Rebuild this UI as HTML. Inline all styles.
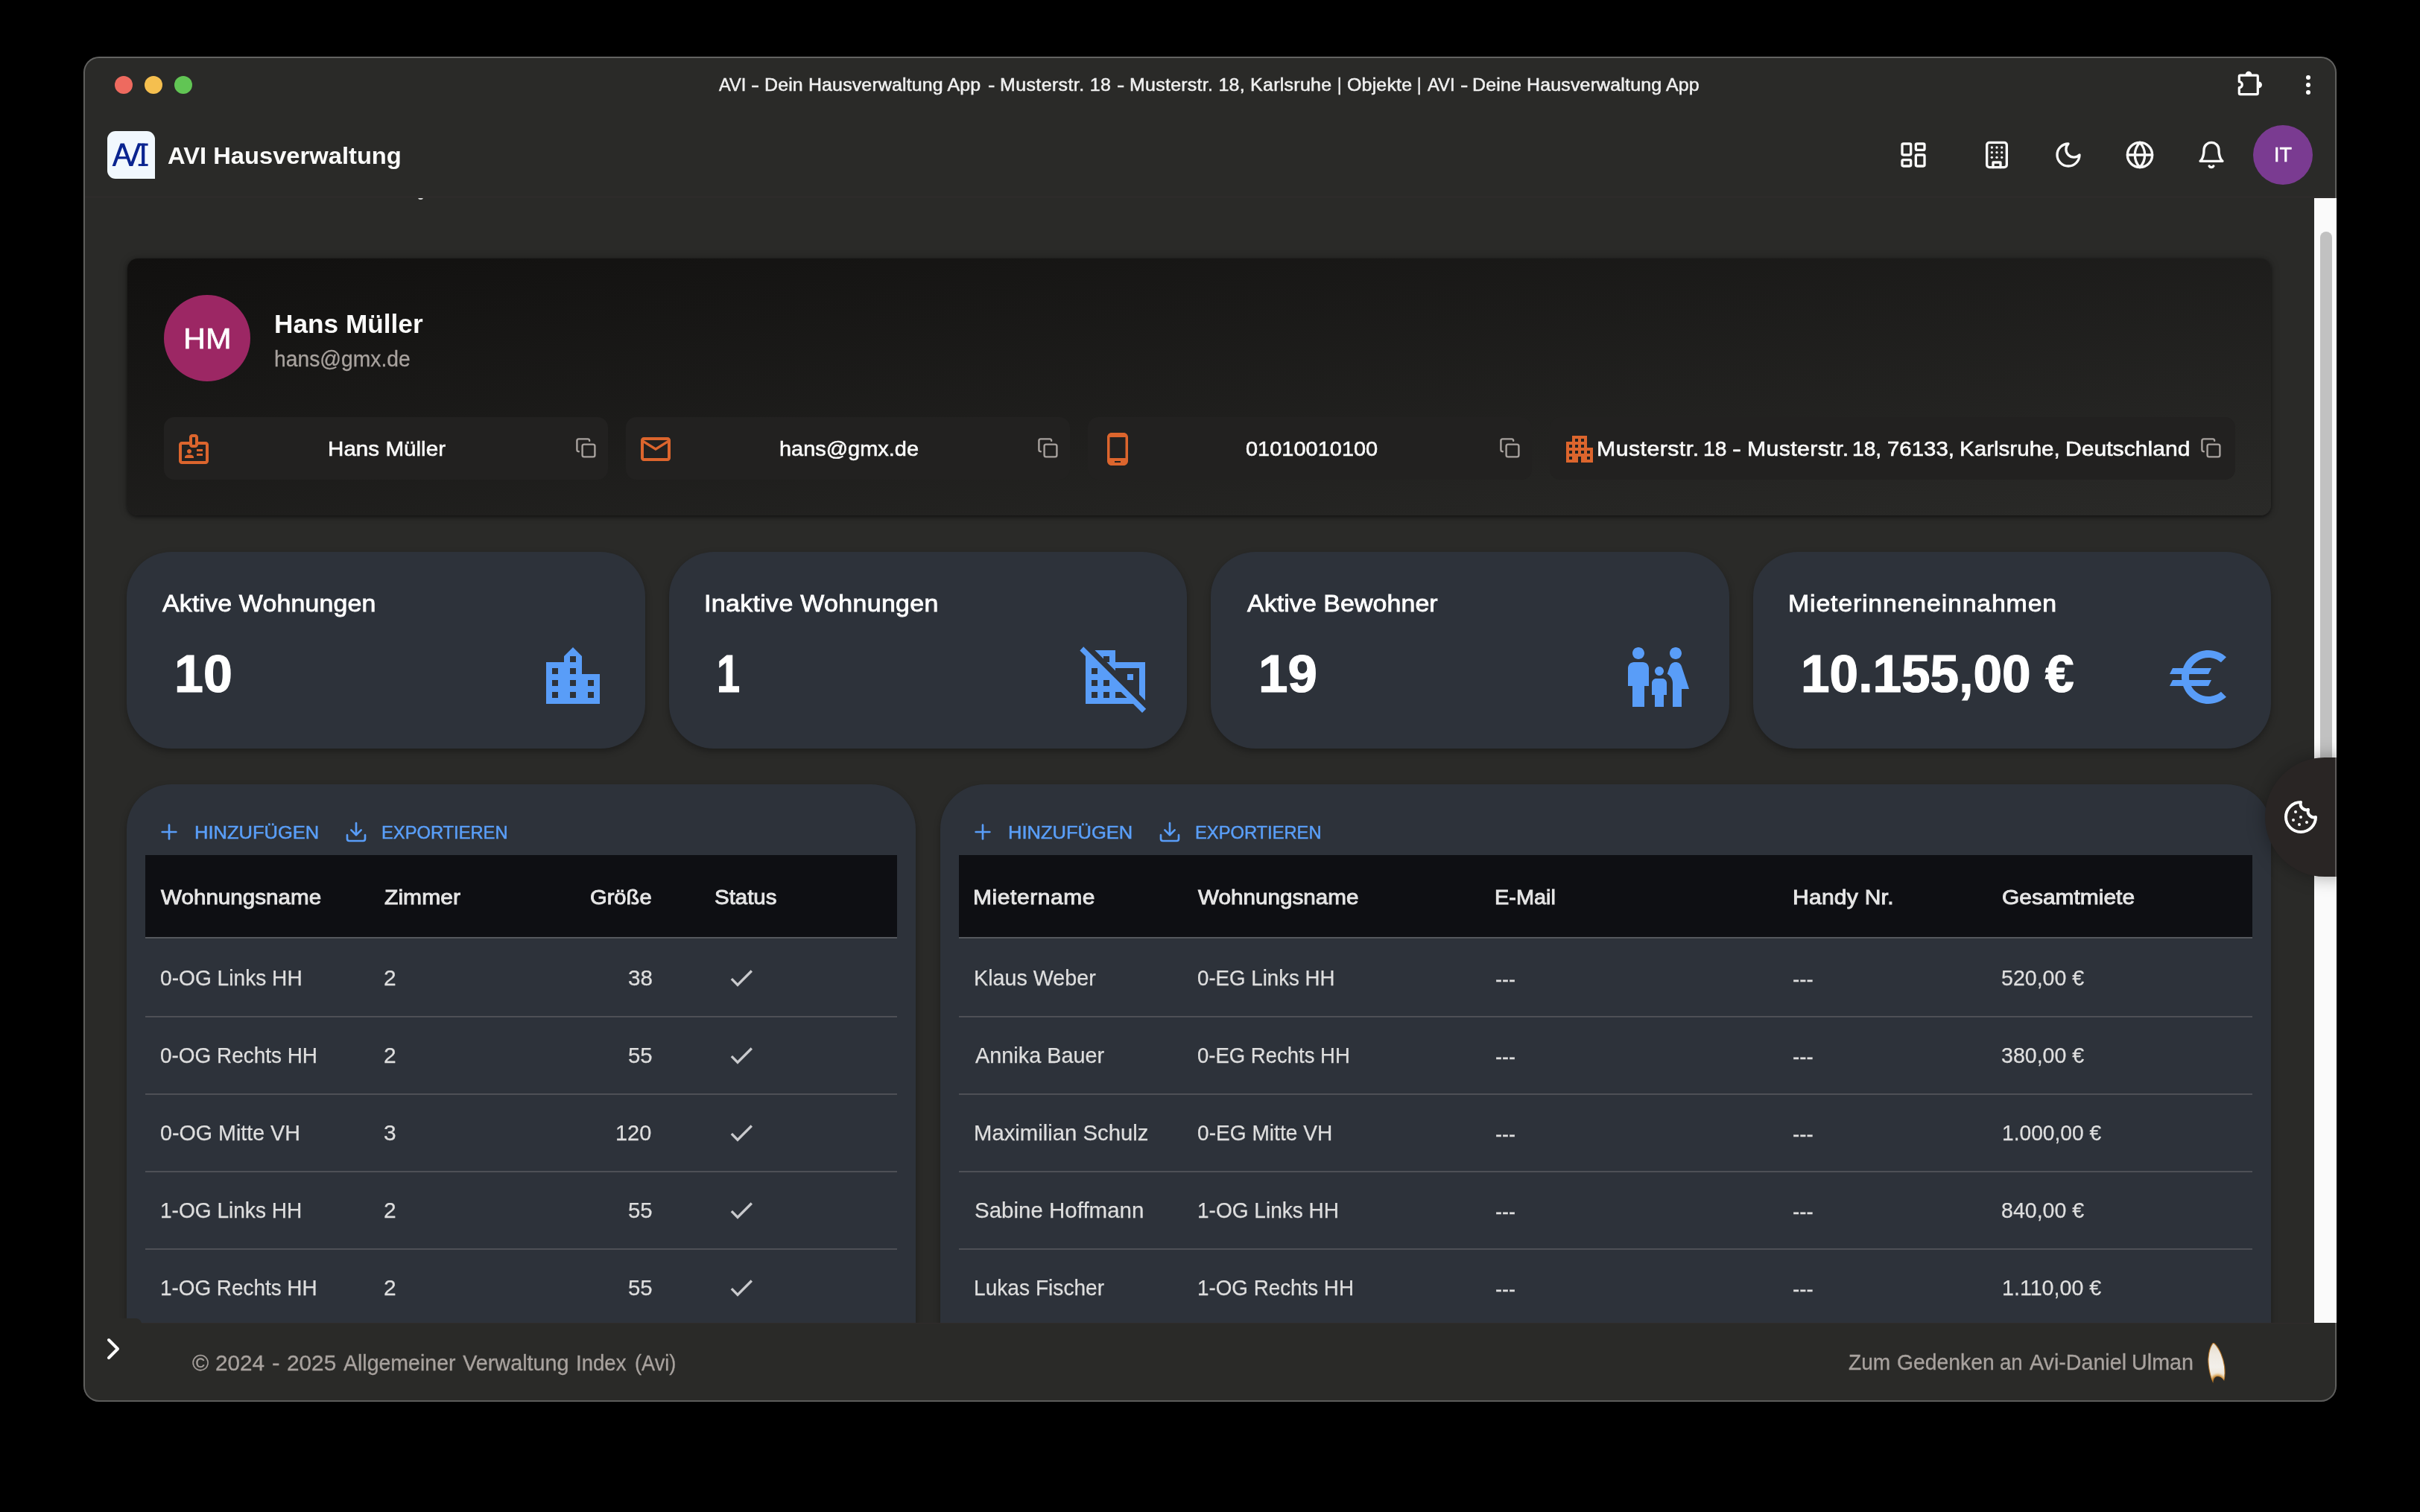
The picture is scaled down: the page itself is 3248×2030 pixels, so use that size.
<!DOCTYPE html>
<html lang="de"><head><meta charset="utf-8"><title>AVI - Dein Hausverwaltung App</title>
<style>
html,body{margin:0;padding:0;background:#000;}
body{width:3248px;height:2030px;overflow:hidden;position:relative;font-family:"Liberation Sans",sans-serif;}
.a{position:absolute;display:block}
.t{position:absolute;white-space:pre;line-height:1;font-family:"Liberation Sans",sans-serif;-webkit-font-smoothing:antialiased}
#win{position:absolute;left:112px;top:76px;width:3024px;height:1805.6px;border-radius:21px;background:#2a2a28}
#bd{position:absolute;left:112px;top:76px;width:3024px;height:1805.6px;border-radius:21px;box-shadow:inset 0 0 0 2px rgba(255,255,255,.24), inset 0 1px 0 1px rgba(255,255,255,.04)}
#clip{position:absolute;left:112px;top:76px;width:3024px;height:1805.6px;border-radius:21px;overflow:hidden}
#content{position:absolute;left:0;top:190px;width:3024px;height:1510px;overflow:hidden}
#page{position:absolute;left:0;top:0;width:3248px;height:2030px}
#txt{position:absolute;left:0;top:0;width:3248px;height:2030px;will-change:transform}
</style></head><body>
<div id="win"></div>
<div id="clip"><div id="content">
<div class="a" style="left:449px;top:-1.5px;width:7px;height:3.5px;border-radius:0 0 4px 4px;background:#d8d8d8"></div>
<div class="a" style="left:59px;top:81px;width:2877px;height:345px;border-radius:14px;background:linear-gradient(to bottom right,#11100f,#2a2a28);box-shadow:0 2px 5px rgba(0,0,0,.5), 0 0 12px rgba(0,0,0,.22)"></div>
<div class="a" style="left:108px;top:130px;width:116px;height:116px;border-radius:50%;background:#9c2764"></div>
<div class="a" style="left:108px;top:294px;width:596px;height:84px;border-radius:14px;background:#222120"></div>
<div class="a" style="left:728px;top:294px;width:596px;height:84px;border-radius:14px;background:#222120"></div>
<div class="a" style="left:1348px;top:294px;width:596px;height:84px;border-radius:14px;background:#222120"></div>
<div class="a" style="left:1968px;top:294px;width:920px;height:84px;border-radius:14px;background:#222120"></div>
<svg class="a" style="left:123.80000000000001px;top:312.6px" width="48" height="48" viewBox="0 0 24 24" fill="#dc652d"><path d="M14 12h4v1.5h-4zm0 3h4v1.5h-4z M20 7h-5V4c0-1.1-.9-2-2-2h-2c-1.1 0-2 .9-2 2v3H4c-1.1 0-2 .9-2 2v11c0 1.1.9 2 2 2h16c1.1 0 2-.9 2-2V9c0-1.1-.9-2-2-2zm-9-3h2v5h-2V4zm9 16H4V9h5c0 1.1.9 2 2 2h2c1.1 0 2-.9 2-2h5v11z M9 15c.83 0 1.5-.67 1.5-1.5S9.830 12 9 12s-1.500.67-1.500 1.500S8.170 15 9 15zm2.080 1.180C10.440 15.900 9.740 15.750 9 15.750s-1.440.15-2.080.43c-.56.240-.92.780-.92 1.390V18h6v-.43c0-.61-.36-1.150-.92-1.390z"/></svg>
<svg class="a" style="left:743.8px;top:312.9px" width="48" height="48" viewBox="0 0 24 24" fill="#dc652d"><path d="M20 4H4c-1.1 0-1.990.9-1.990 2L2 18c0 1.100.9 2 2 2h16c1.100 0 2-.9 2-2V6c0-1.100-.9-2-2-2zm0 14H4V8l8 5 8-5v10zm-8-7L4 6h16l-8 5z"/></svg>
<svg class="a" style="left:1363.8px;top:312.9px" width="48" height="48" viewBox="0 0 24 24" fill="#dc652d"><path d="M16 1H8C6.340 1 5 2.340 5 4v16c0 1.660 1.340 3 3 3h8c1.660 0 3-1.340 3-3V4c0-1.660-1.340-3-3-3zm-2 20h-4v-1h4v1zm3.250-3H6.750V4h10.500v14z"/></svg>
<svg class="a" style="left:1983.9px;top:312.9px" width="48" height="48" viewBox="0 0 24 24" fill="#dc652d"><path d="M17 11V3H7v4H3v14h8v-4h2v4h8V11h-4zM7 19H5v-2h2v2zm0-4H5v-2h2v2zm0-4H5V9h2v2zm4 4H9v-2h2v2zm0-4H9V9h2v2zm0-4H9V5h2v2zm4 8h-2v-2h2v2zm0-4h-2V9h2v2zm0-4h-2V5h2v2zm4 12h-2v-2h2v2zm0-4h-2v-2h2v2z"/></svg>
<svg class="a" style="left:659.6px;top:320.6px" width="28.8" height="28.8" viewBox="0 0 24 24" fill="none" stroke="#a8a29e" stroke-width="2" stroke-linecap="round" stroke-linejoin="round"><rect width="14" height="14" x="8" y="8" rx="2" ry="2"/><path d="M4 16c-1.1 0-2-.9-2-2V4c0-1.1.9-2 2-2h10c1.1 0 2 .9 2 2"/></svg>
<svg class="a" style="left:1279.6px;top:320.6px" width="28.8" height="28.8" viewBox="0 0 24 24" fill="none" stroke="#a8a29e" stroke-width="2" stroke-linecap="round" stroke-linejoin="round"><rect width="14" height="14" x="8" y="8" rx="2" ry="2"/><path d="M4 16c-1.1 0-2-.9-2-2V4c0-1.1.9-2 2-2h10c1.1 0 2 .9 2 2"/></svg>
<svg class="a" style="left:1899.6px;top:320.6px" width="28.8" height="28.8" viewBox="0 0 24 24" fill="none" stroke="#a8a29e" stroke-width="2" stroke-linecap="round" stroke-linejoin="round"><rect width="14" height="14" x="8" y="8" rx="2" ry="2"/><path d="M4 16c-1.1 0-2-.9-2-2V4c0-1.1.9-2 2-2h10c1.1 0 2 .9 2 2"/></svg>
<svg class="a" style="left:2841.4px;top:320.6px" width="28.8" height="28.8" viewBox="0 0 24 24" fill="none" stroke="#a8a29e" stroke-width="2" stroke-linecap="round" stroke-linejoin="round"><rect width="14" height="14" x="8" y="8" rx="2" ry="2"/><path d="M4 16c-1.1 0-2-.9-2-2V4c0-1.1.9-2 2-2h10c1.1 0 2 .9 2 2"/></svg>
<div class="a" style="left:58px;top:475px;width:695.5px;height:263.5px;border-radius:60px;background:#2d323a;box-shadow:0 4px 10px rgba(0,0,0,.3)"></div>
<div class="a" style="left:785.5px;top:475px;width:695.5px;height:263.5px;border-radius:60px;background:#2d323a;box-shadow:0 4px 10px rgba(0,0,0,.3)"></div>
<div class="a" style="left:1513px;top:475px;width:695.5px;height:263.5px;border-radius:60px;background:#2d323a;box-shadow:0 4px 10px rgba(0,0,0,.3)"></div>
<div class="a" style="left:2240.5px;top:475px;width:695.5px;height:263.5px;border-radius:60px;background:#2d323a;box-shadow:0 4px 10px rgba(0,0,0,.3)"></div>
<svg class="a" style="left:608.6px;top:594.8px" width="96" height="96" viewBox="0 0 24 24" fill="#599df8"><path d="M15 11V5l-3-3-3 3v2H3v14h18V11h-6zm-8 8H5v-2h2v2zm0-4H5v-2h2v2zm0-4H5V9h2v2zm6 8h-2v-2h2v2zm0-4h-2v-2h2v2zm0-4h-2V9h2v2zm0-4h-2V5h2v2zm6 12h-2v-2h2v2zm0-4h-2v-2h2v2z"/></svg>
<svg class="a" style="left:1336.7px;top:595.4px" width="96" height="96" viewBox="0 0 24 24" fill="#599df8"><path d="M5.1 3 H12 V7 H22 V19.9 L20 17.9 V9 H12 V9.9 L9.1 7 H10 V5 H8 V5.9 Z M16 11h2v2h-2z M1.3 1.8 L0.1 3.1 L2 5 V21 H18 L21 24 L22.3 22.7 Z M4 9h2v2H4z M4 13h2v2H4z M4 17h2v2H4z M8 13h2v2H8z M8 17h2v2H8z M12 17h1.9l2 2H12z" fill-rule="evenodd"/></svg>
<svg class="a" style="left:2064.8px;top:594.8px" width="96" height="96" viewBox="0 0 24 24" fill="#599df8"><path d="M16 4c0-1.11.89-2 2-2s2 .89 2 2-.89 2-2 2-2-.89-2-2zm4 18v-6h2.500l-2.540-7.630C19.680 7.550 18.920 7 18.060 7h-.12c-.86 0-1.630.55-1.900 1.370l-.86 2.580c1.080.6 1.820 1.730 1.820 3.050v8h3zm-7.500-10.500c.83 0 1.500-.67 1.500-1.500s-.67-1.500-1.500-1.500S11 9.170 11 10s.67 1.500 1.500 1.500zM5.500 6c1.110 0 2-.89 2-2s-.89-2-2-2-2 .89-2 2 .89 2 2 2zm2 16v-7H9V9c0-1.100-.9-2-2-2H4c-1.100 0-2 .9-2 2v6h1.500v7h4zm6.500 0v-4h1v-4c0-.82-.68-1.500-1.500-1.500h-2c-.82 0-1.500.68-1.500 1.500v4h1v4h3z"/></svg>
<svg class="a" style="left:2792px;top:594.8px" width="96" height="96" viewBox="0 0 24 24" fill="#599df8"><path d="M15 18.5c-2.510 0-4.680-1.420-5.760-3.500H15l1-2H8.580c-.05-.33-.08-.66-.08-1s.03-.67.08-1H15l1-2H9.240C10.320 6.920 12.500 5.500 15 5.500c1.610 0 3.090.590 4.230 1.570L21 5.300C19.410 3.870 17.300 3 15 3c-3.920 0-7.240 2.510-8.480 6H3l-1 2h4.060c-.04.330-.06.660-.06 1s.02.670.06 1H3l-1 2h4.520c1.240 3.490 4.560 6 8.480 6 2.310 0 4.410-.870 6-2.300l-1.780-1.770c-1.130.980-2.600 1.570-4.220 1.570z"/></svg>
<div class="a" style="left:58px;top:787px;width:1059px;height:800px;border-radius:60px;background:#2d323a;box-shadow:0 4px 10px rgba(0,0,0,.3)"></div>
<div class="a" style="left:1149.5px;top:787px;width:1786.5px;height:800px;border-radius:60px;background:#2d323a;box-shadow:0 4px 10px rgba(0,0,0,.3)"></div>
<div class="a" style="left:83px;top:882px;width:1009px;height:109.5px;background:#0e0f13"></div>
<div class="a" style="left:83px;top:991.5px;width:1009px;height:2px;background:#55585d"></div>
<div class="a" style="left:83px;top:1097.5px;width:1009px;height:2px;background:#4e5056"></div>
<div class="a" style="left:83px;top:1201.5px;width:1009px;height:2px;background:#4e5056"></div>
<div class="a" style="left:83px;top:1305.5px;width:1009px;height:2px;background:#4e5056"></div>
<div class="a" style="left:83px;top:1409.5px;width:1009px;height:2px;background:#4e5056"></div>
<div class="a" style="left:1175px;top:882px;width:1736px;height:109.5px;background:#0e0f13"></div>
<div class="a" style="left:1175px;top:991.5px;width:1736px;height:2px;background:#55585d"></div>
<div class="a" style="left:1175px;top:1097.5px;width:1736px;height:2px;background:#4e5056"></div>
<div class="a" style="left:1175px;top:1201.5px;width:1736px;height:2px;background:#4e5056"></div>
<div class="a" style="left:1175px;top:1305.5px;width:1736px;height:2px;background:#4e5056"></div>
<div class="a" style="left:1175px;top:1409.5px;width:1736px;height:2px;background:#4e5056"></div>
<svg class="a" style="left:99.19999999999999px;top:835.0px" width="32" height="32" viewBox="0 0 24 24" fill="none" stroke="#599df8" stroke-width="2" stroke-linecap="round" stroke-linejoin="round"><path d="M5 12h14"/><path d="M12 5v14"/></svg>
<svg class="a" style="left:350.0px;top:835.0px" width="32" height="32" viewBox="0 0 24 24" fill="none" stroke="#599df8" stroke-width="2" stroke-linecap="round" stroke-linejoin="round"><path d="M21 15v4a2 2 0 0 1-2 2H5a2 2 0 0 1-2-2v-4"/><polyline points="7 10 12 15 17 10"/><line x1="12" x2="12" y1="15" y2="3"/></svg>
<svg class="a" style="left:1190.7px;top:835.0px" width="32" height="32" viewBox="0 0 24 24" fill="none" stroke="#599df8" stroke-width="2" stroke-linecap="round" stroke-linejoin="round"><path d="M5 12h14"/><path d="M12 5v14"/></svg>
<svg class="a" style="left:1441.5px;top:835.0px" width="32" height="32" viewBox="0 0 24 24" fill="none" stroke="#599df8" stroke-width="2" stroke-linecap="round" stroke-linejoin="round"><path d="M21 15v4a2 2 0 0 1-2 2H5a2 2 0 0 1-2-2v-4"/><polyline points="7 10 12 15 17 10"/><line x1="12" x2="12" y1="15" y2="3"/></svg>
<svg class="a" style="left:863px;top:1027px" width="40" height="40" viewBox="0 0 24 24" fill="#c9cacd"><path d="M9 16.17 4.830 12l-1.420 1.410L9 19 21 7l-1.410-1.410z"/></svg>
<svg class="a" style="left:863px;top:1131px" width="40" height="40" viewBox="0 0 24 24" fill="#c9cacd"><path d="M9 16.17 4.830 12l-1.420 1.410L9 19 21 7l-1.410-1.410z"/></svg>
<svg class="a" style="left:863px;top:1235px" width="40" height="40" viewBox="0 0 24 24" fill="#c9cacd"><path d="M9 16.17 4.830 12l-1.420 1.410L9 19 21 7l-1.410-1.410z"/></svg>
<svg class="a" style="left:863px;top:1339px" width="40" height="40" viewBox="0 0 24 24" fill="#c9cacd"><path d="M9 16.17 4.830 12l-1.420 1.410L9 19 21 7l-1.410-1.410z"/></svg>
<svg class="a" style="left:863px;top:1443px" width="40" height="40" viewBox="0 0 24 24" fill="#c9cacd"><path d="M9 16.17 4.830 12l-1.420 1.410L9 19 21 7l-1.410-1.410z"/></svg>
<div class="a" style="left:2994px;top:0;width:30px;height:1510px;background:#fafafa"></div>
<div class="a" style="left:3002px;top:45px;width:16px;height:800px;border-radius:8px;background:#c1c1c1"></div>
<div class="a" style="left:2928px;top:751px;width:120px;height:160px;border-radius:80px 0 0 80px;background:#292524;box-shadow:0 0 24px rgba(0,0,0,.35)"></div>
<svg class="a" style="left:2952.0px;top:807.0px" width="48" height="48" viewBox="0 0 24 24" fill="none" stroke="#fff" stroke-width="2" stroke-linecap="round" stroke-linejoin="round"><path d="M12 2a10 10 0 1 0 10 10 4 4 0 0 1-5-5 4 4 0 0 1-5-5"/><path d="M8.5 8.5v.01"/><path d="M16 15.5v.01"/><path d="M12 12v.01"/><path d="M11 17v.01"/><path d="M7 14v.01"/></svg>
</div></div>
<div id="page">
<div class="a" style="left:154px;top:102px;width:24px;height:24px;border-radius:50%;background:#ee6a5f"></div>
<div class="a" style="left:194px;top:102px;width:24px;height:24px;border-radius:50%;background:#f5bf4f"></div>
<div class="a" style="left:234px;top:102px;width:24px;height:24px;border-radius:50%;background:#61c554"></div>
<svg class="a" style="left:2996px;top:88px" width="48" height="48" viewBox="2996 88 48 48">
<path d="M3006.9 101.1 H3028.7 A1.6 1.6 0 0 1 3030.3 102.7 V125 A1.6 1.6 0 0 1 3028.7 126.6 H3006.9 A1.6 1.6 0 0 1 3005.3 125 V117.7 A4 4 0 0 0 3005.3 109.7 V102.7 A1.6 1.6 0 0 1 3006.9 101.1 Z" fill="none" stroke="#fff" stroke-width="3.2" stroke-linejoin="round"/>
<path d="M3013.7 100 A4.3 4.3 0 0 1 3022.3 100 Z" fill="#fff"/>
<path d="M3031.6 109.4 A4.4 4.4 0 0 1 3031.6 118.2 Z" fill="#fff"/>
</svg>
<div class="a" style="left:3094.9px;top:101.0px;width:6.2px;height:6.2px;border-radius:50%;background:#fff"></div>
<div class="a" style="left:3094.9px;top:110.95px;width:6.2px;height:6.2px;border-radius:50%;background:#fff"></div>
<div class="a" style="left:3094.9px;top:121.0px;width:6.2px;height:6.2px;border-radius:50%;background:#fff"></div>
<div class="a" style="left:114px;top:264px;width:3020px;height:1px;background:#322d2c"></div>
<svg class="a" style="left:144px;top:176px" width="64" height="64" viewBox="0 0 64 64">
<path d="M11 0 H53 A11 11 0 0 1 64 11 V64 H11 A11 11 0 0 1 0 53 V11 A11 11 0 0 1 11 0 Z" fill="#f1f8fe"/>
<g fill="#0a2490">
<polygon points="6.6,46.9 10.9,46.9 20.3,21.5 29.6,46.9 34.2,46.9 45.4,16.6 41.0,16.6 31.9,41.6 22.8,16.6 17.7,16.6"/>
<rect x="13.6" y="34.2" width="13.6" height="3.2"/>
<rect x="41.0" y="16.6" width="13.6" height="3.0"/>
<rect x="46.1" y="16.6" width="4.2" height="30.3"/>
<rect x="41.7" y="44.1" width="12.9" height="2.8"/>
</g></svg>
<svg class="a" style="left:2548.0px;top:188.0px" width="40" height="40" viewBox="0 0 24 24" fill="none" stroke="#fafaf9" stroke-width="2" stroke-linecap="round" stroke-linejoin="round"><rect width="7" height="9" x="3" y="3" rx="1"/><rect width="7" height="5" x="14" y="3" rx="1"/><rect width="7" height="9" x="14" y="12" rx="1"/><rect width="7" height="5" x="3" y="16" rx="1"/></svg>
<svg class="a" style="left:2660.0px;top:188.0px" width="40" height="40" viewBox="0 0 24 24" fill="none" stroke="#fafaf9" stroke-width="2" stroke-linecap="round" stroke-linejoin="round"><rect width="16" height="20" x="4" y="2" rx="2" ry="2"/><path d="M9 22v-4h6v4"/><path d="M8 6h.01"/><path d="M16 6h.01"/><path d="M12 6h.01"/><path d="M12 10h.01"/><path d="M12 14h.01"/><path d="M16 10h.01"/><path d="M16 14h.01"/><path d="M8 10h.01"/><path d="M8 14h.01"/></svg>
<svg class="a" style="left:2756.0px;top:188.0px" width="40" height="40" viewBox="0 0 24 24" fill="none" stroke="#fafaf9" stroke-width="2" stroke-linecap="round" stroke-linejoin="round"><path d="M12 3a6 6 0 0 0 9 9 9 9 0 1 1-9-9Z"/></svg>
<svg class="a" style="left:2852.0px;top:188.0px" width="40" height="40" viewBox="0 0 24 24" fill="none" stroke="#fafaf9" stroke-width="2" stroke-linecap="round" stroke-linejoin="round"><circle cx="12" cy="12" r="10"/><path d="M12 2a14.5 14.5 0 0 0 0 20 14.5 14.5 0 0 0 0-20"/><path d="M2 12h20"/></svg>
<svg class="a" style="left:2948.0px;top:188.0px" width="40" height="40" viewBox="0 0 24 24" fill="none" stroke="#fafaf9" stroke-width="2" stroke-linecap="round" stroke-linejoin="round"><path d="M6 8a6 6 0 0 1 12 0c0 7 3 9 3 9H3s3-2 3-9"/><path d="M10.3 21a1.94 1.94 0 0 0 3.4 0"/></svg>
<div class="a" style="left:3024px;top:168px;width:80px;height:80px;border-radius:50%;background:#7a3b91"></div>
<div class="a" style="left:114px;top:1776px;width:2992px;height:1px;background:#322d2c;opacity:.8"></div>
<div class="a" style="left:114px;top:1770px;width:76px;height:8px;border-top-right-radius:9px;background:#2a2a28"></div>
<svg class="a" style="left:128.4px;top:1786.5px" width="48" height="48" viewBox="0 0 24 24" fill="none" stroke="#fff" stroke-width="2" stroke-linecap="round" stroke-linejoin="round"><path d="m9 18 6-6-6-6"/></svg>
<svg class="a" style="left:2956px;top:1796px" width="40" height="66" viewBox="2956 1795.3 40 66">
<defs><linearGradient id="fl" x1="0" y1="0" x2="0" y2="1"><stop offset="0" stop-color="#e6dccb"/><stop offset=".3" stop-color="#efe9e0"/><stop offset=".62" stop-color="#f2efea"/><stop offset=".8" stop-color="#efe7d9"/><stop offset="1" stop-color="#ead9b8"/></linearGradient>
<radialGradient id="fr" gradientUnits="userSpaceOnUse" cx="2976.6" cy="1854.5" r="13"><stop offset="0" stop-color="#8a4a08"/><stop offset=".5" stop-color="#b06a14"/><stop offset=".72" stop-color="#d9a65a" stop-opacity=".75"/><stop offset="1" stop-color="#ecd9b5" stop-opacity="0"/></radialGradient>
<filter id="fb" x="-20%" y="-20%" width="140%" height="140%"><feGaussianBlur stdDeviation="0.6"/></filter>
<clipPath id="fc"><path d="M2969.8 1803 C2965 1810 2962.8 1822 2964.2 1832 C2965.2 1841 2967.5 1849 2970 1854.4 C2970.6 1850 2972.5 1847 2976.4 1846.8 C2980.4 1847 2983.2 1849.6 2984.9 1852 C2986.3 1846 2986.4 1840 2985.6 1834 C2984.2 1823 2979 1810 2972.5 1803.6 C2971.5 1802.6 2970.5 1802.4 2969.8 1803 Z"/></clipPath></defs>
<g filter="url(#fb)"><path d="M2969.8 1803 C2965 1810 2962.8 1822 2964.2 1832 C2965.2 1841 2967.5 1849 2970 1854.4 C2970.6 1850 2972.5 1847 2976.4 1846.8 C2980.4 1847 2983.2 1849.6 2984.9 1852 C2986.3 1846 2986.4 1840 2985.6 1834 C2984.2 1823 2979 1810 2972.5 1803.6 C2971.5 1802.6 2970.5 1802.4 2969.8 1803 Z" fill="url(#fl)" stroke="#b8701c" stroke-width="1.2" stroke-opacity=".8"/>
<rect x="2956" y="1830" width="40" height="32" fill="url(#fr)" clip-path="url(#fc)"/></g>
</svg>
</div>
<div id="bd"></div>
<div id="txt">
<span class="t" style="left:964.86px;top:103.00px;font-size:23.1px;color:#f0f0f0;transform:scaleX(1.0205);transform-origin:0 0;-webkit-text-stroke:0.5px #f0f0f0;">AVI</span>
<span class="t" style="left:1008.33px;top:103.00px;font-size:23.1px;color:#f0f0f0;transform:scaleX(1.4308);transform-origin:0 0;-webkit-text-stroke:0.5px #f0f0f0;">-</span>
<span class="t" style="left:1025.99px;top:103.00px;font-size:23.1px;color:#f0f0f0;letter-spacing:0.134px;transform:scaleX(1.0800);transform-origin:0 0;-webkit-text-stroke:0.5px #f0f0f0;">Dein Hausverwaltung App</span>
<span class="t" style="left:1326.09px;top:103.00px;font-size:23.1px;color:#f0f0f0;transform:scaleX(1.2154);transform-origin:0 0;-webkit-text-stroke:0.5px #f0f0f0;">-</span>
<span class="t" style="left:1342.19px;top:103.00px;font-size:23.1px;color:#f0f0f0;letter-spacing:0.370px;transform:scaleX(1.0800);transform-origin:0 0;-webkit-text-stroke:0.5px #f0f0f0;">Musterstr. 18</span>
<span class="t" style="left:1499.30px;top:103.00px;font-size:23.1px;color:#f0f0f0;transform:scaleX(1.3385);transform-origin:0 0;-webkit-text-stroke:0.5px #f0f0f0;">-</span>
<span class="t" style="left:1516.29px;top:103.00px;font-size:23.1px;color:#f0f0f0;letter-spacing:0.253px;transform:scaleX(1.0800);transform-origin:0 0;-webkit-text-stroke:0.5px #f0f0f0;">Musterstr. 18, Karlsruhe</span>
<span class="t" style="left:1794.59px;top:103.00px;font-size:23.1px;color:#f0f0f0;transform:scaleX(0.9200);transform-origin:0 0;-webkit-text-stroke:0.5px #f0f0f0;">|</span>
<span class="t" style="left:1807.59px;top:103.00px;font-size:23.1px;color:#f0f0f0;letter-spacing:0.169px;transform:scaleX(1.0800);transform-origin:0 0;-webkit-text-stroke:0.5px #f0f0f0;">Objekte</span>
<span class="t" style="left:1902.19px;top:103.00px;font-size:23.1px;color:#f0f0f0;transform:scaleX(0.9200);transform-origin:0 0;-webkit-text-stroke:0.5px #f0f0f0;">|</span>
<span class="t" style="left:1915.66px;top:103.00px;font-size:23.1px;color:#f0f0f0;transform:scaleX(1.0291);transform-origin:0 0;-webkit-text-stroke:0.5px #f0f0f0;">AVI</span>
<span class="t" style="left:1959.98px;top:103.00px;font-size:23.1px;color:#f0f0f0;transform:scaleX(1.3538);transform-origin:0 0;-webkit-text-stroke:0.5px #f0f0f0;">-</span>
<span class="t" style="left:1976.19px;top:103.00px;font-size:23.1px;color:#f0f0f0;letter-spacing:0.153px;transform:scaleX(1.0800);transform-origin:0 0;-webkit-text-stroke:0.5px #f0f0f0;">Deine Hausverwaltung App</span>
<span class="t" style="left:224.80px;top:193.00px;font-size:32.1px;color:#fafaf9;font-weight:700;transform:scaleX(1.0196);transform-origin:0 0;">AVI Hausverwaltung</span>
<span class="t" style="left:3051.94px;top:195.00px;font-size:26.9px;color:#ffffff;transform:scaleX(1.0059);transform-origin:0 0;-webkit-text-stroke:0.5px #ffffff;">IT</span>
<span class="t" style="left:245.54px;top:435.01px;font-size:39.2px;color:#ffffff;transform:scaleX(1.0590);transform-origin:0 0;-webkit-text-stroke:0.6px #ffffff;">HM</span>
<span class="t" style="left:368.41px;top:418.01px;font-size:35.4px;color:#fafaf9;font-weight:700;transform:scaleX(0.9954);transform-origin:0 0;">Hans Müller</span>
<span class="t" style="left:367.98px;top:468.01px;font-size:28.8px;color:#a8a29e;transform:scaleX(0.9815);transform-origin:0 0;-webkit-text-stroke:0.3px #a8a29e;">hans@gmx.de</span>
<span class="t" style="left:440.40px;top:589.00px;font-size:28px;color:#fafaf9;transform:scaleX(1.0579);transform-origin:0 0;-webkit-text-stroke:0.6px #fafaf9;">Hans Müller</span>
<span class="t" style="left:1046.28px;top:589.00px;font-size:28px;color:#fafaf9;transform:scaleX(1.0334);transform-origin:0 0;-webkit-text-stroke:0.6px #fafaf9;">hans@gmx.de</span>
<span class="t" style="left:1671.68px;top:589.00px;font-size:28px;color:#fafaf9;transform:scaleX(1.0345);transform-origin:0 0;-webkit-text-stroke:0.6px #fafaf9;">01010010100</span>
<span class="t" style="left:2143.26px;top:589.00px;font-size:28px;color:#fafaf9;letter-spacing:0.441px;transform:scaleX(1.0800);transform-origin:0 0;-webkit-text-stroke:0.6px #fafaf9;">Musterstr.</span>
<span class="t" style="left:2285.79px;top:589.00px;font-size:28px;color:#fafaf9;transform:scaleX(1.0044);transform-origin:0 0;-webkit-text-stroke:0.6px #fafaf9;">18</span>
<span class="t" style="left:2325.10px;top:589.00px;font-size:28px;color:#fafaf9;transform:scaleX(1.2791);transform-origin:0 0;-webkit-text-stroke:0.6px #fafaf9;">-</span>
<span class="t" style="left:2344.76px;top:589.00px;font-size:28px;color:#fafaf9;letter-spacing:0.349px;transform:scaleX(1.0800);transform-origin:0 0;-webkit-text-stroke:0.6px #fafaf9;">Musterstr.</span>
<span class="t" style="left:2486.39px;top:589.00px;font-size:28px;color:#fafaf9;transform:scaleX(1.0043);transform-origin:0 0;-webkit-text-stroke:0.6px #fafaf9;">18,</span>
<span class="t" style="left:2533.37px;top:589.00px;font-size:28px;color:#fafaf9;transform:scaleX(1.0496);transform-origin:0 0;-webkit-text-stroke:0.6px #fafaf9;">76133,</span>
<span class="t" style="left:2629.50px;top:589.00px;font-size:28px;color:#fafaf9;transform:scaleX(1.0560);transform-origin:0 0;-webkit-text-stroke:0.6px #fafaf9;">Karlsruhe,</span>
<span class="t" style="left:2771.87px;top:589.00px;font-size:28px;color:#fafaf9;transform:scaleX(1.0754);transform-origin:0 0;-webkit-text-stroke:0.6px #fafaf9;">Deutschland</span>
<span class="t" style="left:217.63px;top:795.01px;font-size:31.4px;color:#ffffff;letter-spacing:0.145px;transform:scaleX(1.0800);transform-origin:0 0;-webkit-text-stroke:0.8px #ffffff;">Aktive Wohnungen</span>
<span class="t" style="left:944.87px;top:795.01px;font-size:31.4px;color:#ffffff;letter-spacing:0.321px;transform:scaleX(1.0800);transform-origin:0 0;-webkit-text-stroke:0.8px #ffffff;">Inaktive Wohnungen</span>
<span class="t" style="left:1673.83px;top:795.01px;font-size:31.4px;color:#ffffff;letter-spacing:0.081px;transform:scaleX(1.0800);transform-origin:0 0;-webkit-text-stroke:0.8px #ffffff;">Aktive Bewohner</span>
<span class="t" style="left:2400.17px;top:795.01px;font-size:31.4px;color:#ffffff;letter-spacing:0.744px;transform:scaleX(1.0800);transform-origin:0 0;-webkit-text-stroke:0.8px #ffffff;">Mieterinneneinnahmen</span>
<span class="t" style="left:233.63px;top:870.01px;font-size:70.6px;color:#ffffff;font-weight:700;transform:scaleX(0.9910);transform-origin:0 0;-webkit-text-stroke:1.2px #ffffff;">10</span>
<span class="t" style="left:961.61px;top:870.01px;font-size:70.6px;color:#ffffff;font-weight:700;transform:scaleX(0.7926);transform-origin:0 0;-webkit-text-stroke:1.2px #ffffff;">1</span>
<span class="t" style="left:1688.58px;top:870.01px;font-size:70.6px;color:#ffffff;font-weight:700;transform:scaleX(1.0046);transform-origin:0 0;-webkit-text-stroke:1.2px #ffffff;">19</span>
<span class="t" style="left:2416.56px;top:870.01px;font-size:70.6px;color:#ffffff;font-weight:700;transform:scaleX(0.9828);transform-origin:0 0;-webkit-text-stroke:1.2px #ffffff;">10.155,00 €</span>
<span class="t" style="left:261.18px;top:1106.00px;font-size:24.6px;color:#5a9ff9;transform:scaleX(1.0376);transform-origin:0 0;-webkit-text-stroke:0.5px #5a9ff9;">HINZUFÜGEN</span>
<span class="t" style="left:512.31px;top:1106.00px;font-size:24.6px;color:#5a9ff9;transform:scaleX(0.9642);transform-origin:0 0;-webkit-text-stroke:0.5px #5a9ff9;">EXPORTIEREN</span>
<span class="t" style="left:1352.68px;top:1106.00px;font-size:24.6px;color:#5a9ff9;transform:scaleX(1.0376);transform-origin:0 0;-webkit-text-stroke:0.5px #5a9ff9;">HINZUFÜGEN</span>
<span class="t" style="left:1603.81px;top:1106.00px;font-size:24.6px;color:#5a9ff9;transform:scaleX(0.9642);transform-origin:0 0;-webkit-text-stroke:0.5px #5a9ff9;">EXPORTIEREN</span>
<span class="t" style="left:216.48px;top:1191.00px;font-size:27.8px;color:#e6e6e6;transform:scaleX(1.0659);transform-origin:0 0;-webkit-text-stroke:0.9px #e6e6e6;">Wohnungsname</span>
<span class="t" style="left:516.39px;top:1191.00px;font-size:27.8px;color:#e6e6e6;letter-spacing:0.035px;transform:scaleX(1.0800);transform-origin:0 0;-webkit-text-stroke:0.9px #e6e6e6;">Zimmer</span>
<span class="t" style="left:791.92px;top:1191.00px;font-size:27.8px;color:#e6e6e6;transform:scaleX(1.0484);transform-origin:0 0;-webkit-text-stroke:0.9px #e6e6e6;">Größe</span>
<span class="t" style="left:959.12px;top:1191.00px;font-size:27.8px;color:#e6e6e6;transform:scaleX(1.0591);transform-origin:0 0;-webkit-text-stroke:0.9px #e6e6e6;">Status</span>
<span class="t" style="left:1306.03px;top:1191.00px;font-size:27.8px;color:#e6e6e6;letter-spacing:0.513px;transform:scaleX(1.0800);transform-origin:0 0;-webkit-text-stroke:0.9px #e6e6e6;">Mietername</span>
<span class="t" style="left:1608.08px;top:1191.00px;font-size:27.8px;color:#e6e6e6;transform:scaleX(1.0669);transform-origin:0 0;-webkit-text-stroke:0.9px #e6e6e6;">Wohnungsname</span>
<span class="t" style="left:2006.39px;top:1191.00px;font-size:27.8px;color:#e6e6e6;transform:scaleX(1.0394);transform-origin:0 0;-webkit-text-stroke:0.9px #e6e6e6;">E-Mail</span>
<span class="t" style="left:2406.33px;top:1191.00px;font-size:27.8px;color:#e6e6e6;letter-spacing:0.239px;transform:scaleX(1.0800);transform-origin:0 0;-webkit-text-stroke:0.9px #e6e6e6;">Handy Nr.</span>
<span class="t" style="left:2687.41px;top:1191.00px;font-size:27.8px;color:#e6e6e6;transform:scaleX(1.0775);transform-origin:0 0;-webkit-text-stroke:0.9px #e6e6e6;">Gesamtmiete</span>
<span class="t" style="left:214.96px;top:1299.02px;font-size:29.2px;color:#dedede;transform:scaleX(0.9639);transform-origin:0 0;-webkit-text-stroke:0.25px #dedede;">0-OG Links HH</span>
<span class="t" style="left:514.70px;top:1299.02px;font-size:29.2px;color:#dedede;transform:scaleX(1.0246);transform-origin:0 0;-webkit-text-stroke:0.25px #dedede;">2</span>
<span class="t" style="left:842.71px;top:1299.02px;font-size:29.2px;color:#dedede;transform:scaleX(1.0137);transform-origin:0 0;-webkit-text-stroke:0.25px #dedede;">38</span>
<span class="t" style="left:214.96px;top:1403.02px;font-size:29.2px;color:#dedede;transform:scaleX(0.9566);transform-origin:0 0;-webkit-text-stroke:0.25px #dedede;">0-OG Rechts HH</span>
<span class="t" style="left:514.70px;top:1403.02px;font-size:29.2px;color:#dedede;transform:scaleX(1.0246);transform-origin:0 0;-webkit-text-stroke:0.25px #dedede;">2</span>
<span class="t" style="left:843.02px;top:1403.02px;font-size:29.2px;color:#dedede;transform:scaleX(1.0038);transform-origin:0 0;-webkit-text-stroke:0.25px #dedede;">55</span>
<span class="t" style="left:214.94px;top:1507.02px;font-size:29.2px;color:#dedede;transform:scaleX(0.9817);transform-origin:0 0;-webkit-text-stroke:0.25px #dedede;">0-OG Mitte VH</span>
<span class="t" style="left:514.70px;top:1507.02px;font-size:29.2px;color:#dedede;transform:scaleX(1.0246);transform-origin:0 0;-webkit-text-stroke:0.25px #dedede;">3</span>
<span class="t" style="left:826.34px;top:1507.02px;font-size:29.2px;color:#dedede;transform:scaleX(0.9911);transform-origin:0 0;-webkit-text-stroke:0.25px #dedede;">120</span>
<span class="t" style="left:215.40px;top:1611.02px;font-size:29.2px;color:#dedede;transform:scaleX(0.9616);transform-origin:0 0;-webkit-text-stroke:0.25px #dedede;">1-OG Links HH</span>
<span class="t" style="left:514.70px;top:1611.02px;font-size:29.2px;color:#dedede;transform:scaleX(1.0246);transform-origin:0 0;-webkit-text-stroke:0.25px #dedede;">2</span>
<span class="t" style="left:843.02px;top:1611.02px;font-size:29.2px;color:#dedede;transform:scaleX(1.0038);transform-origin:0 0;-webkit-text-stroke:0.25px #dedede;">55</span>
<span class="t" style="left:215.41px;top:1715.02px;font-size:29.2px;color:#dedede;transform:scaleX(0.9546);transform-origin:0 0;-webkit-text-stroke:0.25px #dedede;">1-OG Rechts HH</span>
<span class="t" style="left:514.70px;top:1715.02px;font-size:29.2px;color:#dedede;transform:scaleX(1.0246);transform-origin:0 0;-webkit-text-stroke:0.25px #dedede;">2</span>
<span class="t" style="left:843.02px;top:1715.02px;font-size:29.2px;color:#dedede;transform:scaleX(1.0038);transform-origin:0 0;-webkit-text-stroke:0.25px #dedede;">55</span>
<span class="t" style="left:1306.76px;top:1299.02px;font-size:29.2px;color:#dedede;transform:scaleX(0.9831);transform-origin:0 0;-webkit-text-stroke:0.25px #dedede;">Klaus Weber</span>
<span class="t" style="left:1606.57px;top:1299.02px;font-size:29.2px;color:#dedede;transform:scaleX(0.9483);transform-origin:0 0;-webkit-text-stroke:0.25px #dedede;">0-EG Links HH</span>
<span class="t" style="left:2686.34px;top:1299.02px;font-size:29.2px;color:#dedede;transform:scaleX(0.9784);transform-origin:0 0;-webkit-text-stroke:0.25px #dedede;">520,00 €</span>
<span class="t" style="left:1308.72px;top:1403.02px;font-size:29.2px;color:#dedede;transform:scaleX(0.9882);transform-origin:0 0;-webkit-text-stroke:0.25px #dedede;">Annika Bauer</span>
<span class="t" style="left:1606.58px;top:1403.02px;font-size:29.2px;color:#dedede;transform:scaleX(0.9421);transform-origin:0 0;-webkit-text-stroke:0.25px #dedede;">0-EG Rechts HH</span>
<span class="t" style="left:2686.34px;top:1403.02px;font-size:29.2px;color:#dedede;transform:scaleX(0.9784);transform-origin:0 0;-webkit-text-stroke:0.25px #dedede;">380,00 €</span>
<span class="t" style="left:1306.72px;top:1507.02px;font-size:29.2px;color:#dedede;transform:scaleX(1.0038);transform-origin:0 0;-webkit-text-stroke:0.25px #dedede;">Maximilian Schulz</span>
<span class="t" style="left:1606.56px;top:1507.02px;font-size:29.2px;color:#dedede;transform:scaleX(0.9633);transform-origin:0 0;-webkit-text-stroke:0.25px #dedede;">0-EG Mitte VH</span>
<span class="t" style="left:2686.99px;top:1507.02px;font-size:29.2px;color:#dedede;transform:scaleX(0.9656);transform-origin:0 0;-webkit-text-stroke:0.25px #dedede;">1.000,00 €</span>
<span class="t" style="left:1307.72px;top:1611.02px;font-size:29.2px;color:#dedede;transform:scaleX(1.0107);transform-origin:0 0;-webkit-text-stroke:0.25px #dedede;">Sabine Hoffmann</span>
<span class="t" style="left:1607.10px;top:1611.02px;font-size:29.2px;color:#dedede;transform:scaleX(0.9606);transform-origin:0 0;-webkit-text-stroke:0.25px #dedede;">1-OG Links HH</span>
<span class="t" style="left:2686.34px;top:1611.02px;font-size:29.2px;color:#dedede;transform:scaleX(0.9784);transform-origin:0 0;-webkit-text-stroke:0.25px #dedede;">840,00 €</span>
<span class="t" style="left:1306.79px;top:1715.02px;font-size:29.2px;color:#dedede;transform:scaleX(0.9639);transform-origin:0 0;-webkit-text-stroke:0.25px #dedede;">Lukas Fischer</span>
<span class="t" style="left:1607.12px;top:1715.02px;font-size:29.2px;color:#dedede;transform:scaleX(0.9518);transform-origin:0 0;-webkit-text-stroke:0.25px #dedede;">1-OG Rechts HH</span>
<span class="t" style="left:2686.96px;top:1715.02px;font-size:29.2px;color:#dedede;transform:scaleX(0.9813);transform-origin:0 0;-webkit-text-stroke:0.25px #dedede;">1.110,00 €</span>
<span class="t" style="left:2006.69px;top:1301.00px;font-size:29.2px;color:#dedede;transform:scaleX(0.9245);transform-origin:0 0;-webkit-text-stroke:0.25px #dedede;">---</span>
<span class="t" style="left:2406.17px;top:1301.00px;font-size:29.2px;color:#dedede;transform:scaleX(0.9498);transform-origin:0 0;-webkit-text-stroke:0.25px #dedede;">---</span>
<span class="t" style="left:2006.69px;top:1405.00px;font-size:29.2px;color:#dedede;transform:scaleX(0.9245);transform-origin:0 0;-webkit-text-stroke:0.25px #dedede;">---</span>
<span class="t" style="left:2406.17px;top:1405.00px;font-size:29.2px;color:#dedede;transform:scaleX(0.9498);transform-origin:0 0;-webkit-text-stroke:0.25px #dedede;">---</span>
<span class="t" style="left:2006.69px;top:1509.00px;font-size:29.2px;color:#dedede;transform:scaleX(0.9245);transform-origin:0 0;-webkit-text-stroke:0.25px #dedede;">---</span>
<span class="t" style="left:2406.17px;top:1509.00px;font-size:29.2px;color:#dedede;transform:scaleX(0.9498);transform-origin:0 0;-webkit-text-stroke:0.25px #dedede;">---</span>
<span class="t" style="left:2006.69px;top:1613.00px;font-size:29.2px;color:#dedede;transform:scaleX(0.9245);transform-origin:0 0;-webkit-text-stroke:0.25px #dedede;">---</span>
<span class="t" style="left:2406.17px;top:1613.00px;font-size:29.2px;color:#dedede;transform:scaleX(0.9498);transform-origin:0 0;-webkit-text-stroke:0.25px #dedede;">---</span>
<span class="t" style="left:2006.69px;top:1717.00px;font-size:29.2px;color:#dedede;transform:scaleX(0.9245);transform-origin:0 0;-webkit-text-stroke:0.25px #dedede;">---</span>
<span class="t" style="left:2406.17px;top:1717.00px;font-size:29.2px;color:#dedede;transform:scaleX(0.9498);transform-origin:0 0;-webkit-text-stroke:0.25px #dedede;">---</span>
<span class="t" style="left:257.56px;top:1816.01px;font-size:28.8px;color:#a8a29e;transform:scaleX(1.0469);transform-origin:0 0;-webkit-text-stroke:0.3px #a8a29e;">©</span>
<span class="t" style="left:288.72px;top:1816.01px;font-size:28.8px;color:#a8a29e;transform:scaleX(1.0308);transform-origin:0 0;-webkit-text-stroke:0.3px #a8a29e;">2024</span>
<span class="t" style="left:364.67px;top:1816.01px;font-size:28.8px;color:#a8a29e;transform:scaleX(1.0964);transform-origin:0 0;-webkit-text-stroke:0.3px #a8a29e;">-</span>
<span class="t" style="left:384.62px;top:1816.01px;font-size:28.8px;color:#a8a29e;transform:scaleX(1.0329);transform-origin:0 0;-webkit-text-stroke:0.3px #a8a29e;">2025</span>
<span class="t" style="left:460.85px;top:1816.01px;font-size:28.8px;color:#a8a29e;transform:scaleX(0.9897);transform-origin:0 0;-webkit-text-stroke:0.3px #a8a29e;">Allgemeiner</span>
<span class="t" style="left:621.15px;top:1816.01px;font-size:28.8px;color:#a8a29e;-webkit-text-stroke:0.3px #a8a29e;">Verwaltung</span>
<span class="t" style="left:772.63px;top:1816.01px;font-size:28.8px;color:#a8a29e;transform:scaleX(0.9575);transform-origin:0 0;-webkit-text-stroke:0.3px #a8a29e;">Index</span>
<span class="t" style="left:852.10px;top:1816.01px;font-size:28.8px;color:#a8a29e;transform:scaleX(0.9437);transform-origin:0 0;-webkit-text-stroke:0.3px #a8a29e;">(Avi)</span>
<span class="t" style="left:2481.15px;top:1815.01px;font-size:28.8px;color:#a8a29e;transform:scaleX(0.9753);transform-origin:0 0;-webkit-text-stroke:0.3px #a8a29e;">Zum</span>
<span class="t" style="left:2545.56px;top:1815.01px;font-size:28.8px;color:#a8a29e;transform:scaleX(0.9834);transform-origin:0 0;-webkit-text-stroke:0.3px #a8a29e;">Gedenken</span>
<span class="t" style="left:2684.19px;top:1815.01px;font-size:28.8px;color:#a8a29e;transform:scaleX(0.9566);transform-origin:0 0;-webkit-text-stroke:0.3px #a8a29e;">an</span>
<span class="t" style="left:2724.15px;top:1815.01px;font-size:28.8px;color:#a8a29e;transform:scaleX(0.9945);transform-origin:0 0;-webkit-text-stroke:0.3px #a8a29e;">Avi-Daniel</span>
<span class="t" style="left:2860.95px;top:1815.01px;font-size:28.8px;color:#a8a29e;transform:scaleX(0.9975);transform-origin:0 0;-webkit-text-stroke:0.3px #a8a29e;">Ulman</span>
</div>
</body></html>
